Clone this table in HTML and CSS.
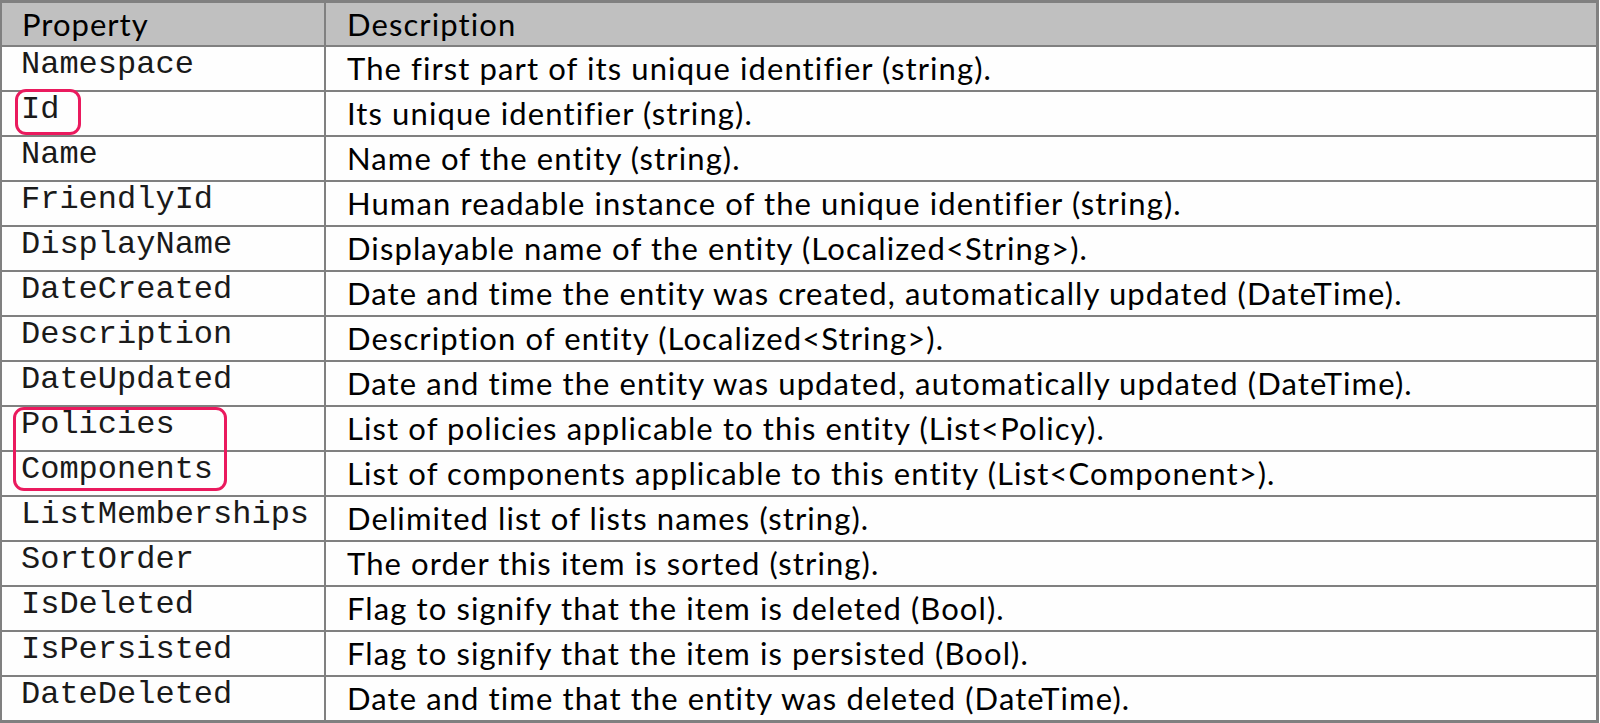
FILE: index.html
```html
<!DOCTYPE html>
<html lang="en">
<head>
<meta charset="utf-8">
<title>Entity properties</title>
<link rel="stylesheet" href="styles.css">
</head>
<body>
<div class="wrap">
  <div class="table">
    <div class="row head"><div class="c1">Property</div><div class="c2">Description</div></div>
    <div class="row"><div class="c1 mono">Namespace</div><div class="c2">The first part of its unique identifier (string).</div></div>
    <div class="row"><div class="c1 mono">Id</div><div class="c2">Its unique identifier (string).</div></div>
    <div class="row"><div class="c1 mono">Name</div><div class="c2">Name of the entity (string).</div></div>
    <div class="row"><div class="c1 mono">FriendlyId</div><div class="c2">Human readable instance of the unique identifier (string).</div></div>
    <div class="row"><div class="c1 mono">DisplayName</div><div class="c2">Displayable name of the entity (Localized&lt;String&gt;).</div></div>
    <div class="row"><div class="c1 mono">DateCreated</div><div class="c2">Date and time the entity was created, automatically updated (DateTime).</div></div>
    <div class="row"><div class="c1 mono">Description</div><div class="c2">Description of entity (Localized&lt;String&gt;).</div></div>
    <div class="row"><div class="c1 mono">DateUpdated</div><div class="c2">Date and time the entity was updated, automatically updated (DateTime).</div></div>
    <div class="row"><div class="c1 mono">Policies</div><div class="c2">List of policies applicable to this entity (List&lt;Policy).</div></div>
    <div class="row"><div class="c1 mono">Components</div><div class="c2">List of components applicable to this entity (List&lt;Component&gt;).</div></div>
    <div class="row"><div class="c1 mono">ListMemberships</div><div class="c2">Delimited list of lists names (string).</div></div>
    <div class="row"><div class="c1 mono">SortOrder</div><div class="c2">The order this item is sorted (string).</div></div>
    <div class="row"><div class="c1 mono">IsDeleted</div><div class="c2">Flag to signify that the item is deleted (Bool).</div></div>
    <div class="row"><div class="c1 mono">IsPersisted</div><div class="c2">Flag to signify that the item is persisted (Bool).</div></div>
    <div class="row"><div class="c1 mono">DateDeleted</div><div class="c2">Date and time that the entity was deleted (DateTime).</div></div>
  </div>
  <div class="mark mark-id"></div>
  <div class="mark mark-pc"></div>
</div>
</body>
</html>
```
FILE: styles.css
```css
html, body {
  margin: 0;
  padding: 0;
  background: #ffffff;
}
.wrap {
  position: relative;
  width: 1599px;
}
.table {
  width: 1599px;
  box-sizing: border-box;
  border-left: 2px solid #808080;
  border-right: 3px solid #808080;
  border-bottom: 3px solid #808080;
  background: #fefefe;
}
.row {
  display: flex;
  height: 45px;
  box-sizing: border-box;
  border-top: 2px solid #808080;
}
.row.head {
  border-top: 3px solid #808080;
  background: #c0c0c0;
}
.c1 {
  width: 322px;
  flex: none;
  box-sizing: border-box;
  padding-left: 20px;
  font-family: "Lato", "Noto Sans", sans-serif;
  font-size: 31px;
  letter-spacing: 1px;
  line-height: 42px;
  color: #000;
  white-space: nowrap;
}
.c2 {
  flex: 1;
  border-left: 2px solid #808080;
  padding-left: 21px;
  font-family: "Lato", "Noto Sans", sans-serif;
  font-size: 31px;
  letter-spacing: 1.1px;
  line-height: 43px;
  color: #000;
  white-space: nowrap;
}
.head .c1, .head .c2 {
  line-height: 42px;
}
.c1.mono {
  font-family: "Liberation Mono", "Courier New", monospace;
  font-size: 32px;
  letter-spacing: 0;
  line-height: 36px;
  padding-left: 19px;
  color: #1a1a1a;
}
.mark {
  position: absolute;
  border: 3px solid #ea1a5e;
  border-radius: 11px;
  box-sizing: border-box;
}
.mark-id {
  left: 15px;
  top: 89px;
  width: 66px;
  height: 46px;
}
.mark-pc {
  left: 13px;
  top: 407px;
  width: 214px;
  height: 84px;
}
```
